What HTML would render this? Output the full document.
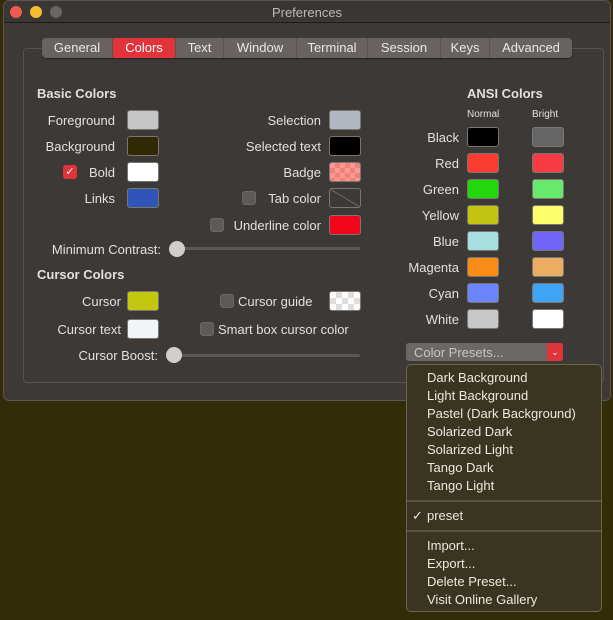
<!DOCTYPE html>
<html><head><meta charset="utf-8"><style>
*{margin:0;padding:0;box-sizing:border-box}
body{width:613px;height:620px;overflow:hidden;background:#332c09;font-family:"Liberation Sans",sans-serif;font-size:13px;color:#e2e0de;position:relative}
.a{position:absolute}
.win{left:3px;top:0;width:608px;height:401px;background:#3d3936;border-radius:6px;border:1px solid #5a5552;overflow:hidden}
.tb{left:0;top:0;width:100%;height:22px;background:#3a3633;border-bottom:1px solid #1e1c1a}
.dot{width:12px;height:12px;border-radius:50%;top:5px}
.box{left:19px;top:47px;width:581px;height:335px;border:1px solid #57524f;border-radius:4px}
.tabs{left:42px;top:38px;height:20px;width:530px;background:#686360;border-radius:4px;display:flex;overflow:hidden;box-shadow:0 1px 1px rgba(0,0,0,.4)}
.tabs div{height:20px;line-height:19px;text-align:center;color:#eae8e6;border-right:1px solid #57524f;font-size:13px}
.sw{width:32px;height:20px;border-radius:3px;border:1px solid #7a7673}
.lbl{text-align:right;white-space:nowrap}
.h{font-weight:bold}
.cb{width:14px;height:14px;border-radius:3px;background:#5e5a57;border:1px solid #6c6865}
.trk{height:3px;background:#5c5855;border-radius:2px}
.th{width:16px;height:16px;border-radius:50%;background:#d0cecc}
.menu{left:406px;top:364px;width:196px;height:248px;background:#3a3520;border:1px solid #6b6650;border-radius:5px}
.mi{position:absolute;left:20px;color:#ece9e0;font-size:13px}
.sep{position:absolute;left:0;width:194px;height:2px;background:#5a5540}
</style></head><body>
<div class="a win">
 <div class="a tb"></div>
 <div class="a dot" style="left:6px;background:#ee5a54"></div>
 <div class="a dot" style="left:26px;background:#f5be30"></div>
 <div class="a dot" style="left:46px;background:#6a6663"></div>
 <div class="a" style="left:0;width:100%;top:4px;text-align:center;color:#bdb9b6">Preferences</div>
 <div class="a box"></div>
</div>
<div class="a tabs">
 <div style="width:71px">General</div>
 <div style="width:63px;background:#e0333a;color:#fff">Colors</div>
 <div style="width:48px">Text</div>
 <div style="width:73px">Window</div>
 <div style="width:71px">Terminal</div>
 <div style="width:73px">Session</div>
 <div style="width:49px">Keys</div>
 <div style="width:82px;border:none">Advanced</div>
</div>

<div class="a h" style="left:37px;top:86px">Basic Colors</div>
<div class="a lbl" style="right:498px;top:113px">Foreground</div><div class="a sw" style="left:127px;top:110px;background:#c6c6c6"></div>
<div class="a lbl" style="right:498px;top:139px">Background</div><div class="a sw" style="left:127px;top:136px;background:#2f2904"></div>
<div class="a" style="left:63px;top:165px;width:14px;height:14px;border-radius:3px;background:#e0333a;color:#fff;font-size:11px;line-height:14px;text-align:center">✓</div>
<div class="a lbl" style="right:498px;top:165px">Bold</div><div class="a sw" style="left:127px;top:162px;background:#fff"></div>
<div class="a lbl" style="right:498px;top:191px">Links</div><div class="a sw" style="left:127px;top:188px;background:#2f55b8"></div>

<div class="a lbl" style="right:292px;top:113px">Selection</div><div class="a sw" style="left:329px;top:110px;background:#b2b8c2"></div>
<div class="a lbl" style="right:292px;top:139px">Selected text</div><div class="a sw" style="left:329px;top:136px;background:#000"></div>
<div class="a lbl" style="right:292px;top:165px">Badge</div><div class="a sw" style="left:329px;top:162px;background:repeating-conic-gradient(#f08078 0 25%,#f79a92 0 50%) 0 0/10px 10px"></div>
<div class="a cb" style="left:242px;top:191px"></div>
<div class="a lbl" style="right:292px;top:191px">Tab color</div><div class="a sw" style="left:329px;top:188px;background:linear-gradient(to top right,transparent 48%,#8a8683 50%,transparent 52%)"></div>
<div class="a cb" style="left:210px;top:218px"></div>
<div class="a lbl" style="right:292px;top:218px">Underline color</div><div class="a sw" style="left:329px;top:215px;background:#f2071a"></div>

<div class="a lbl" style="right:452px;top:242px">Minimum Contrast:</div>
<div class="a trk" style="left:175px;top:247px;width:185px"></div><div class="a th" style="left:169px;top:241px"></div>

<div class="a h" style="left:37px;top:267px">Cursor Colors</div>
<div class="a lbl" style="right:492px;top:294px">Cursor</div><div class="a sw" style="left:127px;top:291px;background:#c3c70f"></div>
<div class="a lbl" style="right:492px;top:322px">Cursor text</div><div class="a sw" style="left:127px;top:319px;background:#f1f5f7"></div>
<div class="a cb" style="left:220px;top:294px"></div>
<div class="a" style="left:238px;top:294px">Cursor guide</div><div class="a sw" style="left:329px;top:291px;background:repeating-conic-gradient(#ddd 0 25%,#fff 0 50%) 0 0/12px 12px"></div>
<div class="a cb" style="left:200px;top:322px"></div>
<div class="a" style="left:218px;top:322px">Smart box cursor color</div>
<div class="a lbl" style="right:455px;top:348px">Cursor Boost:</div>
<div class="a trk" style="left:172px;top:354px;width:188px"></div><div class="a th" style="left:166px;top:347px"></div>

<div class="a h" style="left:467px;top:86px">ANSI Colors</div>
<div class="a" style="left:467px;top:109px;font-size:10px">Normal</div>
<div class="a" style="left:532px;top:109px;font-size:10px">Bright</div>
<div class="a lbl" style="right:154px;top:130px">Black</div><div class="a sw" style="left:467px;top:127px;background:#000"></div><div class="a sw" style="left:532px;top:127px;background:#656565"></div>
<div class="a lbl" style="right:154px;top:156px">Red</div><div class="a sw" style="left:467px;top:153px;background:#f93c2f"></div><div class="a sw" style="left:532px;top:153px;background:#f63b43"></div>
<div class="a lbl" style="right:154px;top:182px">Green</div><div class="a sw" style="left:467px;top:179px;background:#22d70b"></div><div class="a sw" style="left:532px;top:179px;background:#67ea6b"></div>
<div class="a lbl" style="right:154px;top:208px">Yellow</div><div class="a sw" style="left:467px;top:205px;background:#c3c512"></div><div class="a sw" style="left:532px;top:205px;background:#fdfd6c"></div>
<div class="a lbl" style="right:154px;top:234px">Blue</div><div class="a sw" style="left:467px;top:231px;background:#a6dfdf"></div><div class="a sw" style="left:532px;top:231px;background:#7264f9"></div>
<div class="a lbl" style="right:154px;top:260px">Magenta</div><div class="a sw" style="left:467px;top:257px;background:#f98b19"></div><div class="a sw" style="left:532px;top:257px;background:#ebae63"></div>
<div class="a lbl" style="right:154px;top:286px">Cyan</div><div class="a sw" style="left:467px;top:283px;background:#6b86fd"></div><div class="a sw" style="left:532px;top:283px;background:#3ea4f8"></div>
<div class="a lbl" style="right:154px;top:312px">White</div><div class="a sw" style="left:467px;top:309px;background:#c7c7c7"></div><div class="a sw" style="left:532px;top:309px;background:#fff"></div>

<div class="a" style="left:406px;top:343px;width:157px;height:18px;background:#6c6865;border-radius:3px;overflow:hidden">
 <div class="a" style="left:8px;top:2px;color:#c9c6c3">Color Presets...</div>
 <div class="a" style="right:0;top:0;width:16px;height:18px;background:#e0333a;color:#fff;font-size:9px;text-align:center;line-height:18px">⌄</div>
</div>

<div class="a menu">
 <div class="mi" style="top:5px">Dark Background</div>
 <div class="mi" style="top:23px">Light Background</div>
 <div class="mi" style="top:41px">Pastel (Dark Background)</div>
 <div class="mi" style="top:59px">Solarized Dark</div>
 <div class="mi" style="top:77px">Solarized Light</div>
 <div class="mi" style="top:95px">Tango Dark</div>
 <div class="mi" style="top:113px">Tango Light</div>
 <div class="sep" style="top:135px"></div>
 <div class="mi" style="top:143px;left:5px">✓</div>
 <div class="mi" style="top:143px">preset</div>
 <div class="sep" style="top:165px"></div>
 <div class="mi" style="top:173px">Import...</div>
 <div class="mi" style="top:191px">Export...</div>
 <div class="mi" style="top:209px">Delete Preset...</div>
 <div class="mi" style="top:227px">Visit Online Gallery</div>
</div>
</body></html>
